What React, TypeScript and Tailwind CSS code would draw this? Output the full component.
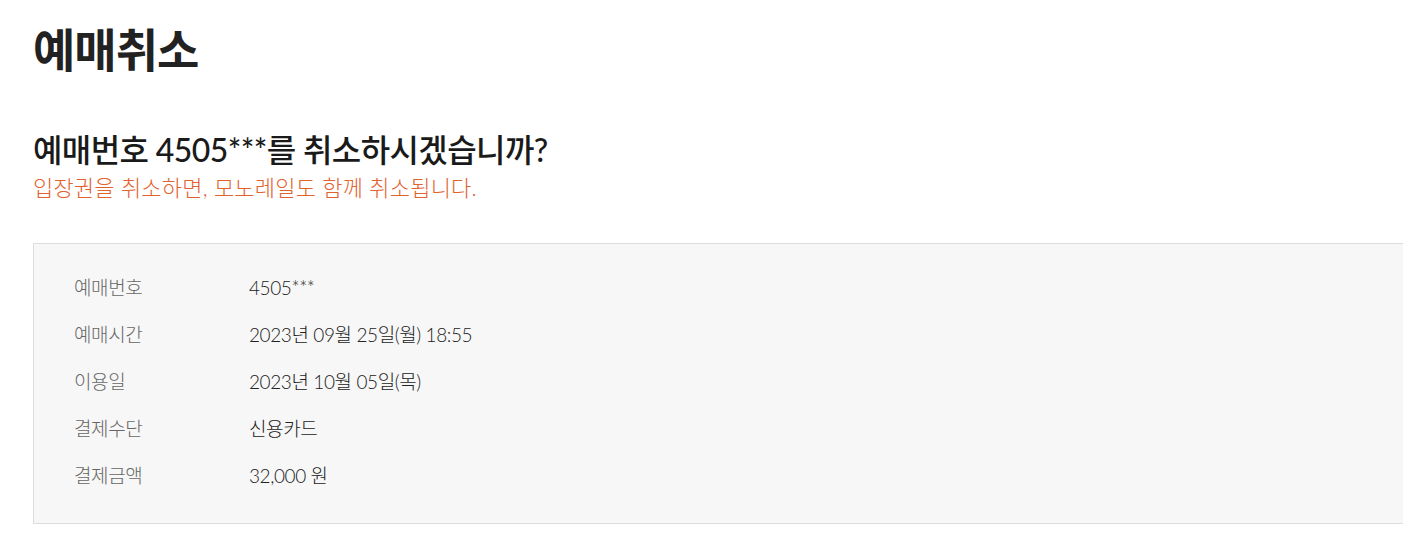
import React from "react";

const rows: [string, string][] = [
  ["예매번호", "4505***"],
  ["예매시간", "2023년 09월 25일(월) 18:55"],
  ["이용일", "2023년 10월 05일(목)"],
  ["결제수단", "신용카드"],
  ["결제금액", "32,000 원"],
];

export default function App() {
  return (
    <div
      className="min-h-[552px] bg-white pl-[33px] pt-[22px] overflow-hidden"
      style={{ fontFamily: "Lato, 'Noto Sans CJK KR', sans-serif" }}
    >
      <h1 className="text-[46px] font-bold leading-[56px] tracking-[-1px] text-[#222]">예매취소</h1>
      <h2 className="mt-[52px] text-[32px] font-medium leading-[40px] tracking-[-0.6px] text-[#1a1a1a]">
        예매번호 4505***를 취소하시겠습니까?
      </h2>
      <p className="text-[22px] font-light leading-[36px] tracking-[0.2px] text-[#e2622f]">
        입장권을 취소하면, 모노레일도 함께 취소됩니다.
      </p>
      <div className="mt-[37px] -mr-[10px] h-[281px] border border-[#dddddd] bg-[#f7f7f7] pl-[40px] pt-[21px]">
        <div className="flex flex-col">
          {rows.map(([k, v]) => (
            <div key={k} className="flex h-[47px] items-center text-[19px] font-light tracking-[-0.4px]">
              <span className="w-[175px] text-[#666]">{k}</span>
              <span className="text-[#222]">{v}</span>
            </div>
          ))}
        </div>
      </div>
    </div>
  );
}
